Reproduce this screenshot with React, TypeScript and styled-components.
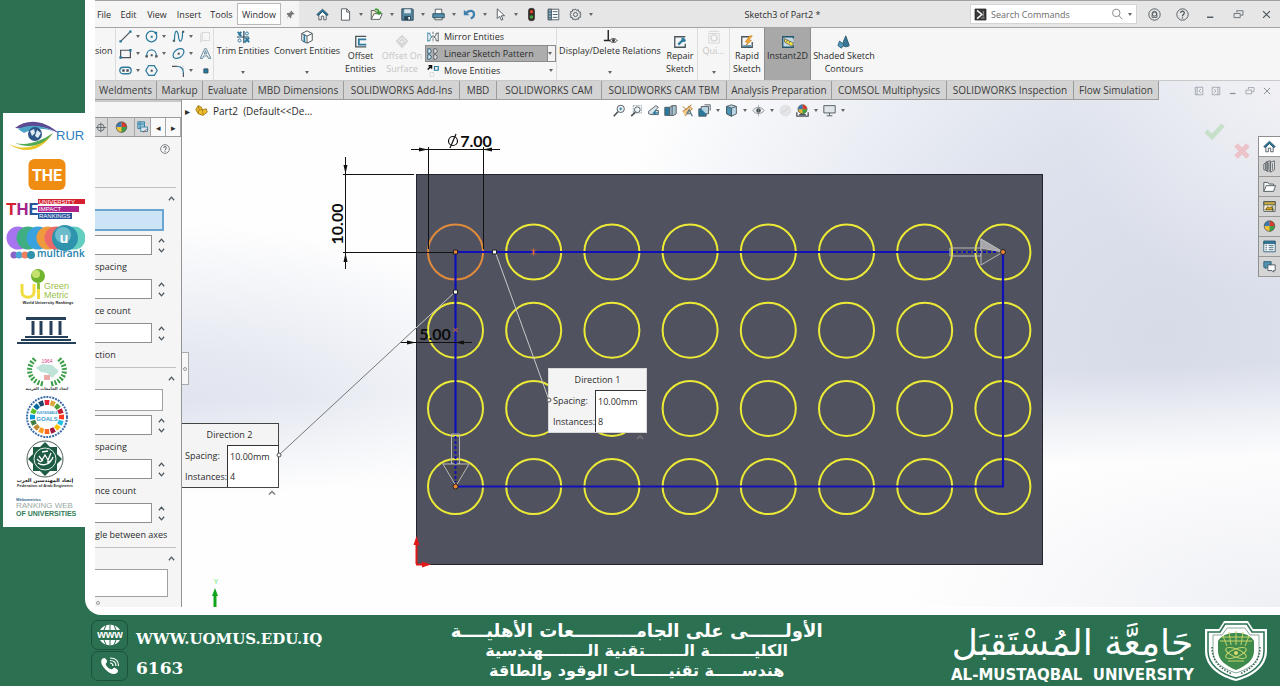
import React from "react";
import styled, { createGlobalStyle, css } from "styled-components";

const INK = "#4a545b";
const BLUE = "#2b7a9e";
const GREEN = "#2a7051";

const GlobalStyle = createGlobalStyle`
  *, *::before, *::after { box-sizing: border-box; }
  body {
    margin: 0;
    background: ${GREEN};
    font-family: "Open Sans", "Noto Sans", sans-serif;
    font-size: 9px;
    color: #2c2c2c;
  }
  button, input { font: inherit; color: inherit; }
  button { border: 0; background: none; padding: 0; cursor: pointer; }
`;

/* ---------- page frame ---------- */

const Page = styled.div`
  min-height: 100vh;
  display: grid;
  grid-template-columns: 85px minmax(0, 1fr);
  grid-template-rows: 1fr auto;
  background: ${GREEN};
`;

const Rail = styled.aside`
  padding: 113px 0 0 3px;
`;

const LogoList = styled.div`
  display: flex;
  flex-direction: column;
  overflow: hidden;
  background: #fff;
  svg { display: block; }
`;

const Card = styled.main`
  display: flex;
  padding: 0 0 8px 10px;
  background: #fff;
  border-bottom-left-radius: 16px;
`;

const AppWindow = styled.div`
  flex: 1;
  min-width: 0;
  display: flex;
  flex-direction: column;
  overflow: hidden;
`;

/* ---------- icons ---------- */

const Svg = styled.svg<{ $s?: number }>`
  display: block;
  flex: none;
  width: ${(p) => p.$s ?? 14}px;
  height: ${(p) => p.$s ?? 14}px;
  overflow: visible;
  fill: none;
  stroke: ${INK};
  stroke-width: 1.1;
`;

const art: Record<string, React.ReactNode> = {
  home: <><path d="M3.500 8v6.500h3V10h3v4.500h3V8L8 4z" fill="#fff" /><path d="M1 8 8 1.500l7 6.500-1.500 1.500L8 4.500 2.500 9.500z" fill={BLUE} stroke="#25495c" strokeWidth="1" /></>,
  file: <path d="M3 1h6.500L13 4.500V15H3zM9.500 1v4H13" fill="#fff" />,
  open: <><path d="M1.500 14V3h4l1.500 2h3" fill="#f0e9c8" /><path d="M1.500 14 5 7h10l-3 7z" fill="#fff" /><path d="M6 2c4-1 5 1 5 4M8.500 4.500 11 7.500l2.500-3" stroke="#3a9a2d" strokeWidth="2" /></>,
  save: <><path d="M1 1h13l1 1v13H1z" fill="#54869f" stroke="#2a4756" /><path d="M4 1.500h8v5H4z" fill="#dce8ee" stroke="none" /><path d="M4 10h8v5H4z" fill="#2a4756" stroke="none" /><path d="M9 11h2v3H9z" fill="#fff" stroke="none" /></>,
  print: <><path d="M4 7V1.500h8V7" fill="#fff" /><path d="M1 7h14v5H1z" fill="#4f8fb0" stroke="#28495a" /><path d="M3.500 12h9v2.500h-9z" fill="#fff" /></>,
  undo: <><path d="M1 2v7h7z" fill="#3f7fae" stroke="none" /><path d="M4 6c4-4 9-3 9.500 1 .3 3-1.500 5-4 6" stroke="#3f7fae" strokeWidth="2.800" /></>,
  cursor: <path d="M4 1v12l3-3 2 5 2-1-2-4.500h4z" fill="#fff" />,
  traffic: <><rect x="4.500" y="0.500" width="7" height="15" rx="2.500" fill="#3c2b24" stroke="#2b2b2b" /><circle cx="8" cy="4.500" r="2" fill="#e3422d" stroke="none" /><circle cx="8" cy="11" r="2.200" fill="#3fa648" stroke="none" /></>,
  list: <><path d="M1.500 1.500h13v13h-13z" fill="#fff" /><path d="M1.500 1.500h4v13h-4z" fill="#84aec2" /><path d="M7 4.500h6M7 8h6M7 11.500h6M1.500 5h4M1.500 8.500h4M1.500 12h4" stroke="#35566a" /></>,
  gear: <><path d="m8 1 1.200 2 2.200-.8.4 2.400 2.400.4-.8 2.200L15 8l-1.600 1.200.8 2.200-2.400.4-.4 2.400-2.200-.8L8 15l-1.200-1.600-2.200.8-.4-2.400-2.400-.4.8-2.200L1 8l1.600-1.200-.8-2.200 2.400-.4.4-2.400 2.200.8z" /><circle cx="8" cy="8" r="2.500" /></>,
  pin: <path d="m9 1 6 6-1.500 1-1.500-.5-2.500 3v3L8 15l-3-4-4 4 3-5-3-3 1.500-1.500h3l3-2.500L8 2z" fill="#777" stroke="none" />,
  terminal: <><path d="M0 0h16v16H0z" fill="#3a3a3a" stroke="#222" /><path d="m3 2 7 6-7 6" stroke="#fff" strokeWidth="2" /><path d="M9 13h5M12 3v8" stroke="#bbb" /></>,
  search: <><circle cx="7" cy="6.500" r="5" stroke="#777" /><path d="m10.500 10 4.500 5" stroke="#777" /></>,
  user: <><circle cx="8" cy="8" r="7" /><circle cx="8" cy="7" r="3" /><path d="M5 11.500h6V9c-1-5-5-5-6 0z" /></>,
  help: <><circle cx="8" cy="8" r="7" /><path d="M5.800 6.200c0-3 4.400-3 4.400 0C10.200 8 8 8 8 10M8 11.500v1.500" strokeWidth="1.500" /></>,
  minimize: <path d="M3 12h9" strokeWidth="2" />,
  restore: <path d="M5.500 5V2.500h9V9h-3M1.500 6.500h9v6h-9z" />,
  close: <path d="m3 3 10 10M13 3 3 13" strokeWidth="1.600" />,
  paneLeft: <path d="M2 2h12v12H2zM5 2v12M11 5 8 8l3 3" />,
  paneRight: <path d="M2 2h12v12H2zM11 2v12M5 5l3 3-3 3" />,
  line: <><path d="M2 14 14 2" stroke={INK} strokeWidth="1.500" /><path d="M.5 12.500h3v3h-3zM12.500.5h3v3h-3z" fill={BLUE} stroke="none" /></>,
  circle: <><circle cx="8" cy="8" r="6.500" stroke={BLUE} strokeWidth="1.500" /><path d="M7 7h2.500v2.500H7zM12 2h3v3h-3z" fill={BLUE} stroke="none" /></>,
  spline: <><path d="M3 14C3-2 7-1 8 8s5 8 5-6" stroke={BLUE} strokeWidth="1.500" /><path d="M1 12h2.500v2.500H1zM12.500 1H15v2.500h-2.500z" fill={INK} stroke="none" /></>,
  plane: <path d="M4 3h9v10H4zM4 13l-2 2V5l2-2" stroke="#d3d3d3" />,
  rect: <><path d="M2 4h12v9H2z" stroke={INK} strokeWidth="1.500" /><path d="M.5 11.500h3v3h-3zM12.500 2.500h3v3h-3z" fill={BLUE} stroke="none" /></>,
  arc: <><path d="M2 11C2 1 14 1 14 11" stroke={BLUE} strokeWidth="1.500" /><path d="M.5 10h3v3h-3zM12.500 10h3v3h-3zM7 9h2.500v2.500H7z" fill={INK} stroke="none" /></>,
  ellipse: <><ellipse cx="8" cy="8" rx="7.500" ry="5" transform="rotate(-38 8 8)" stroke={BLUE} strokeWidth="1.500" /><path d="M7 7h2.500v2.500H7z" fill={INK} stroke="none" /></>,
  textA: <path d="m1.500 14 5.500-12h2L14.500 14h-3l-1-3h-5l-1 3zM6.500 8.500h3L8 4.500z" stroke="#557f96" />,
  slot: <><rect x="1" y="4" width="14" height="8" rx="4" stroke={BLUE} strokeWidth="1.600" /><path d="M4 6.500h3v3H4zM9 6.500h3v3H9z" fill={INK} stroke="none" /></>,
  polygon: <><path d="M4.500 2h7L15 8l-3.500 6h-7L1 8z" stroke={BLUE} strokeWidth="1.500" /><path d="M7 7h2.500v2.500H7z" fill={INK} stroke="none" /></>,
  fillet: <><path d="M6 3c5 0 8 3 8 8" stroke={BLUE} strokeWidth="1.500" /><path d="M7 3h7v6" stroke="#aaa" strokeDasharray="1 2" /><path d="M0 3h6M14 11v5" stroke={INK} strokeWidth="1.500" /></>,
  point: <path d="M6 6h5v5H6z" fill={BLUE} stroke="#25495c" />,
  trim: <><path d="M1 8h14M9 1v14" stroke="#25495c" strokeWidth="1.400" /><path d="m2 2 4 5M6 2 3 6M11 9l4 5M15 9l-5 5" stroke={BLUE} strokeWidth="2.200" /><circle cx="12.500" cy="4" r="1.700" stroke={BLUE} /><circle cx="4" cy="12" r="1.700" stroke={BLUE} /></>,
  convert: <><path d="m8 1 6 3v8l-6 3-6-3V4z" fill="#fff" /><path d="M2 4l6 3 6-3M8 7v8" /><path d="M5 5v9" stroke={BLUE} strokeWidth="2" /></>,
  offset: <><path d="M14 1.500H2v12h12" stroke={INK} strokeWidth="1.500" /><path d="M14 5H5.500v6H14" stroke={BLUE} strokeWidth="2" /></>,
  offsetSurface: <path d="m8 1 6 6-6 7-6-7zM8 5l3 3-3 3-3-3z" stroke="#d6d6d6" strokeWidth="2" />,
  mirror: <><path d="M8 1v14" stroke={INK} strokeDasharray="3 1.500" /><path d="M1 2v12M1 3h3v3l3 2-3 2v3H1" stroke={BLUE} /><path d="M15 2v12M15 3h-3v3L9 8l3 2v3h3" stroke={INK} /></>,
  linear: <><path d="M1 1h3l2 3-2 3H1zM1 9h3l2 3-2 3H1z" stroke="#1f556f" fill="#cfe0e8" /><path d="M9 1h3l2 3-2 3H9zM9 9h3l2 3-2 3H9z" fill="#ddd" /></>,
  move: <><path d="m1 6 5-5M2 1h4v4" stroke="#111" strokeWidth="2" /><path d="M10 2h5v5h-5z" stroke={BLUE} strokeWidth="1.600" /><path d="M4 10h5v5H4z" stroke="#c5c5c5" strokeDasharray="1.500 1" /></>,
  relation: <><path d="M6 0v12M1 12h8" stroke="#222" strokeWidth="1.600" /><path d="M8 12c2-3 6-3 8 0-2 3-6 3-8 0z" fill="#fff" stroke="#333" /><circle cx="12" cy="12" r="1.600" fill="#333" stroke="none" /></>,
  repair: <><path d="M14 2H2v12h12v-4" stroke={INK} strokeWidth="1.500" /><path d="m6 11 5-5" stroke={BLUE} strokeWidth="2.500" /><path d="M10 4c2-1 4 0 4 3l-3 .5z" fill={BLUE} stroke={BLUE} /></>,
  snap: <><path d="M2 1.500h12M2 4v11h12V4z" stroke="#d6d6d6" /><circle cx="8" cy="9" r="3.500" stroke="#d6d6d6" strokeWidth="1.500" /></>,
  rapid: <><path d="M11 2H2v12h12V8" stroke={INK} strokeWidth="1.500" /><path d="M3.500 12.500h9" stroke={BLUE} strokeWidth="1.500" /><path d="m11 1-5 7h3l-2 4 6-6h-3l4-5z" fill="#f5b13a" stroke="#c67c18" strokeWidth=".8" /></>,
  instant: <><path d="M14 4V2H2v12h12v-2" stroke="#1f556f" strokeWidth="1.500" fill="#c5d8e2" /><path d="m4 4 10 5-1 4L4 8z" fill="#f3e34a" stroke="#555" strokeWidth=".8" /><path d="m7 6-.5 2M10 7.500 9.500 9" stroke="#555" /></>,
  shaded: <><path d="M6 11 10 1l4 11c-2 2-6 2-8-1z" fill="#3a7794" stroke="#25586f" /><path d="m1 12 2-5 5 4-3 4z" fill="#5797b5" stroke="#2c6580" /></>,
  zoomFit: <><circle cx="9.500" cy="6" r="4.500" fill="#eef4f7" /><path d="m6 9.500-5 5.500" strokeWidth="2" /><path d="M7.500 6h4M9.500 4v4" stroke={BLUE} /></>,
  zoomArea: <><path d="M4 2h10v9H4z" stroke="#8a9ba5" strokeDasharray="2 1" /><circle cx="9" cy="7" r="3.500" fill="#eef4f7" /><path d="m6.500 10-5 5" strokeWidth="2" /></>,
  prevView: <><path d="m2 9 9-7 3 2-4 4h4v5H5l-3-1z" fill="#dbe6ec" /><path d="M14 11H8l3-3M8 11l3 2" stroke={BLUE} strokeWidth="1.500" /></>,
  section: <><path d="M1 4h6v10H1z" fill={BLUE} /><path d="M7 4l3-2h5v10l-3 2H7z" fill="#aac5d2" /><path d="M10 2v12" /></>,
  wand: <><path d="m2 3 5 4M8 4l5-3M2 9l9-6 3 3-9 9" fill="#f4c989" stroke="#b0793a" /><path d="m7 12 3-5 4 8M8 12h5" stroke="#54798c" strokeWidth="1.500" /></>,
  orient: <><path d="M1 6h9v9H1z" fill={BLUE} /><path d="M4 6V3h9v9h-3" fill="#b8d2df" /><path d="M8 1h7v7" /></>,
  display: <><path d="m8 1 6 2v9l-6 3-6-3V3z" fill="#b8d6e4" /><path d="m2 3 6 2v10l-6-3z" fill="#4c94b5" /><path d="m8 5 6-2" /></>,
  eye: <><path d="M1 8c3-5 11-5 14 0-3 5-11 5-14 0z" fill="#eee" stroke="#8a9297" /><circle cx="8" cy="8" r="2.800" fill="#4b565c" stroke="none" /><path d="M8 1v14" stroke="#888" strokeWidth=".8" /></>,
  ballGrey: <><circle cx="8" cy="8" r="6.500" fill="#e4e4e6" stroke="#dcdce0" /><path d="M8 8 12 3M8 8l-5 3" stroke="#cfcfd4" /></>,
  ball: <><circle cx="8" cy="7.500" r="6.500" fill="#f2c230" stroke="none" /><path d="M8 7.500V1a6.500 6.500 0 0 1 6.500 6.500z" fill="#d83a2f" stroke="none" /><path d="M8 7.500V1a6.500 6.500 0 0 0-6.500 6.500z" fill="#3b78b8" stroke="none" /><path d="M8 7.500v6.500a6.500 6.500 0 0 0 6.500-6.500z" fill="#3f9c49" stroke="none" /><circle cx="8" cy="7.500" r="6.500" strokeWidth=".9" /></>,
  scene: <><circle cx="8" cy="6.500" r="5.500" fill="#e9b42c" stroke="#555" /><path d="M8 6.500V1a5.500 5.500 0 0 1 5.500 5.500z" fill="#d83a2f" stroke="none" /><path d="M8 6.500V1a5.500 5.500 0 0 0-5.500 5.500z" fill="#3b78b8" stroke="none" /><path d="M8 6.500h5.500A5.500 5.500 0 0 1 8 12z" fill="#3f9c49" stroke="none" /><path d="M1 10v5h14v-5M4 13h8" strokeWidth="1.600" /></>,
  monitor: <><path d="M1 2h14v9H1z" fill="#dfe5e9" /><path d="M8 11v3M4.500 14.500h7" /></>,
  part: <><path d="m1 7 3-5 4 2 1 3 5-1 1 4-5 4-6-2z" fill="#f0bf2f" stroke="#9c7414" /><path d="m4 2 1 5 4 0M5 7l-1 4M9 7l1 6" stroke="#9c7414" strokeWidth=".9" /></>,
  target: <><circle cx="7" cy="8" r="5" /><path d="M0 8h15M7 1v14" /></>,
  table: <><path d="M1 1h9v9H1z" fill="#9cc7dc" stroke={BLUE} /><path d="M1 4h9M4 1v9M5 8h9v6H5z" stroke={BLUE} fill="#d7e7ef" /><path d="M8 15l5-4" stroke="#a44" /></>,
  library: <><path d="m1 5 4-3v11l-4-1zM5 2l4-1v12l-4 1zM9 3l5-2v11l-5 3z" fill="#e8e8e8" strokeWidth="1" /><path d="M3 4v8M7 3v9M11.500 4v8" strokeWidth="1" /></>,
  folder: <><path d="M1 14V3h5l1.500 2H13v2" fill="#f5f5f5" /><path d="m1 14 3-7h11.500L13 14z" fill="#fff" /></>,
  palette: <><path d="M1 2h14v12H1z" fill="#fff7d8" /><path d="M1 2h14v4H1z" fill="#c9a93c" /><path d="m3 12 3-4 2 2 2-2 3 4z" fill="#d8a51d" stroke="#6a5210" /><path d="M12 7v7" /></>,
  props: <><path d="M1 1.500h14v13H1z" fill="#fff" stroke="#2f6178" /><path d="M1 1.500h14v3H1z" fill={BLUE} stroke="#2f6178" /><path d="M3 7h2M3 9.500h2M3 12h2M7 7h6M7 9.500h6M7 12h6" stroke="#2f6178" /></>,
  chat: <><path d="M1 2h9v7H5l-2 2V9H1z" fill="#4f93b3" stroke="#2d5f76" /><path d="M6 6h9v7h-2v2l-2-2H6z" fill="#fff" /></>,
};

const Icon = ({ name, s }: { name: string; s?: number }) => (
  <Svg $s={s} viewBox="0 0 16 16" aria-hidden="true">{art[name]}</Svg>
);

const CaretSvg = styled.svg`
  display: block;
  flex: none;
  width: 4px;
  height: 3px;
  fill: #666;
`;
const Caret = () => <CaretSvg viewBox="0 0 4 3" aria-hidden="true"><path d="M0 0h4L2 3z" /></CaretSvg>;

/* ---------- title bar ---------- */

const TitleBar = styled.header`
  display: flex;
  height: 28px;
  border-top: 1px solid #a59fa2;
  border-bottom: 1px solid #a3a3a3;
  background: #e6e6e6;
`;

const MenuBar = styled.nav`
  display: flex;
  align-items: center;
  width: 204px;
  background: #f5f5f5;
`;

const MenuItem = styled.button<{ $w: number; $open?: boolean }>`
  width: ${(p) => p.$w}px;
  height: 22px;
  white-space: nowrap;
  ${(p) => p.$open && css`
    margin-left: 2px;
    background: #fff;
    border: 1px solid #b9b9b9;
  `}
`;

const IconButton = styled.button<{ $w: number }>`
  flex: none;
  display: flex;
  align-items: center;
  justify-content: center;
  width: ${(p) => p.$w}px;
  min-height: 15px;
`;

const QuickTools = styled.div`
  display: flex;
  align-items: center;
  padding-left: 12px;
`;

const DocTitle = styled.h1`
  flex: 1;
  margin: 0;
  align-self: center;
  text-align: center;
  font-size: 9px;
  font-weight: 400;
  white-space: nowrap;
`;

const SearchBox = styled.label`
  display: flex;
  align-items: center;
  gap: 5px;
  width: 167px;
  height: 20px;
  margin: 3px 3px 0 0;
  padding: 0 4px;
  background: #fff;
  border: 1px solid #d4d4d4;
`;

const SearchInput = styled.input`
  flex: 1;
  min-width: 0;
  border: 0;
  padding: 0;
  outline: 0;
  background: none;
  &::placeholder { color: #6c6c6c; opacity: 1; }
`;

const Row = styled.div`
  display: flex;
  align-items: center;
`;

/* ---------- ribbon ---------- */

const Ribbon = styled.section`
  display: flex;
  height: 52px;
  background: #f6f6f6;
  overflow: hidden;
`;

const Clipped = styled.div`
  width: 20px;
  padding-top: 16px;
  line-height: 13px;
`;

const ToolGrid = styled.div`
  display: grid;
  grid-template-columns: 26px 27px 27px 14px;
  grid-auto-rows: 17px;
  width: 99px;
  padding-left: 3px;
  border-left: 1px solid #dcdcdc;
  border-right: 1px solid #dcdcdc;
`;

const ToolCell = styled.button`
  display: flex;
  align-items: center;
  gap: 4px;
`;

const RibbonButton = styled.button<{ $w: number; $tall?: boolean; $on?: boolean; $off?: boolean; $rule?: boolean }>`
  flex: none;
  display: flex;
  flex-direction: column;
  align-items: center;
  width: ${(p) => p.$w}px;
  padding: ${(p) => (p.$tall ? 7 : 2)}px 0 6px;
  line-height: 13px;
  white-space: nowrap;
  ${(p) => p.$on && css`background: #a8a8a8; border: 1px solid #8d8d8d; border-width: 0 1px;`}
  ${(p) => p.$off && css`color: #c4c4c4;`}
  ${(p) => p.$rule && css`border-left: 1px solid #dcdcdc;`}
  ${CaretSvg} { margin-top: auto; }
`;

const PatternList = styled.div`
  width: 132px;
  display: flex;
  flex-direction: column;
  border-right: 1px solid #dcdcdc;
`;

const PatternItem = styled.button<{ $on?: boolean }>`
  display: flex;
  align-items: center;
  gap: 5px;
  width: 131px;
  height: 17px;
  padding: 0 0 0 2px;
  text-align: left;
  white-space: nowrap;
  ${(p) => p.$on && css`
    border: 1px solid #8a8a8a;
    padding-left: 1px;
    background: linear-gradient(to right, #adadad 121px, #8a8a8a 121px, #8a8a8a 122px, #f2f2f2 122px);
  `}
  ${CaretSvg} { margin: 0 3px 0 auto; }
`;

/* ---------- workspace ---------- */

const Workspace = styled.div`
  flex: 1;
  display: flex;
  flex-direction: column;
  background:
    radial-gradient(ellipse 380px 170px at 100% 100%, #eff0f5 0%, rgba(255, 255, 255, 0) 100%),
    linear-gradient(178deg, rgba(254, 254, 254, 0) 57%, #fefefe 74%),
    radial-gradient(ellipse 220px 220px at 100% 0%, #f1f1f5 0%, rgba(241, 241, 245, 0) 100%),
    radial-gradient(ellipse 420px 200px at 6% 65%, #dfe3ee 0%, rgba(223, 227, 238, 0.8) 35%, rgba(255, 255, 255, 0) 100%),
    radial-gradient(ellipse 560px 520px at 90% 48%, #d7dbe8 0%, #dde2ed 40%, rgba(255, 255, 255, 0) 100%),
    #fefefe;
`;

const TabRow = styled.div`
  display: flex;
  height: 20px;
  border-top: 1px solid #c9c9c9;
`;

const Tabs = styled.nav`
  display: flex;
  font-size: 10px;
`;

const Tab = styled.button<{ $w: number }>`
  width: ${(p) => p.$w}px;
  background: #d3d3d3;
  border: 1px solid #9b9b9b;
  border-width: 0 1px 1px 0;
  color: #3c3c3c;
  white-space: nowrap;
`;

const WindowTools = styled.div`
  display: flex;
  align-items: center;
  margin-left: auto;
  padding-right: 5px;
  opacity: 0.6;
`;

const Body = styled.div`
  flex: 1;
  display: flex;
`;

const Panel = styled.aside`
  flex: none;
  width: 87px;
  background: #f5f5f6;
  border-right: 1px solid #949494;
`;

const PanelTop = styled.div`
  height: 18px;
  border-top: 2px solid #c9c9c9;
  border-bottom: 1px solid #9b9b9b;
`;

const PanelTabs = styled.div`
  display: flex;
  height: 19px;
  overflow: hidden;
  background: #d6d6d6;
  border-bottom: 1px solid #9b9b9b;
`;

const PanelTab = styled.button<{ $w: number; $light?: boolean }>`
  flex: none;
  display: flex;
  align-items: center;
  justify-content: center;
  width: ${(p) => p.$w}px;
  border-right: 1px solid #a8a8a8;
  font-size: 9px;
  ${(p) => p.$light && css`background: #fafafa;`}
`;

const PanelHead = styled.div`
  display: flex;
  justify-content: flex-end;
  align-items: flex-start;
  height: 51px;
  margin-right: 5px;
  padding: 7px 6px 0 0;
  border-bottom: 1px solid #c2c2c2;
`;

const Group = styled.section`
  margin-right: 5px;
  border-bottom: 1px solid #c2c2c2;
  &:last-child { border-bottom: 0; }
`;

const Collapse = styled.button`
  display: flex;
  align-items: center;
  justify-content: flex-end;
  width: 100%;
  height: 21px;
  padding-right: 1px;
`;

const WideField = styled.input<{ $w: number; $h: number; $on?: boolean }>`
  display: block;
  width: ${(p) => p.$w}px;
  height: ${(p) => p.$h}px;
  margin-bottom: 4px;
  padding: 0 4px;
  border: 1px solid #a0a0a0;
  border-left: 0;
  border-radius: 0;
  background: #fff;
  ${(p) => p.$on && css`background: #cde3f6; border-color: #6aa6cf; border-width: 2px 2px 2px 0;`}
`;

const ScrollDot = styled.div`
  width: 4px;
  height: 4px;
  margin: 0 0 0 1px;
  border: 1px solid #999;
  border-radius: 50%;
`;

const SpinRow = styled.div`
  display: flex;
  height: 20px;
`;

const SpinField = styled.input`
  width: 57px;
  padding: 0 4px;
  border: 1px solid #8f8f8f;
  border-left: 0;
  background: #fff;
`;

const Spinner = styled.div`
  display: flex;
  flex-direction: column;
  justify-content: space-around;
  align-items: center;
  width: 18px;
`;

const FieldLabel = styled.label`
  display: block;
  height: 24px;
  line-height: 24px;
  white-space: nowrap;
  overflow: hidden;
`;

const Chevron = ({ down, s = 7 }: { down?: boolean; s?: number }) => (
  <Svg $s={s} viewBox="0 0 8 8" aria-hidden="true">
    <path d={down ? "m1 2 3 3.500L7 2" : "m1 6 3-3.500L7 6"} strokeWidth="1.400" />
  </Svg>
);

const Spin = ({ id, label }: { id: string; label?: string }) => (
  <SpinRow>
    <SpinField id={id} aria-label={label} />
    <Spinner>
      <button aria-label="Increase"><Chevron /></button>
      <button aria-label="Decrease"><Chevron down /></button>
    </Spinner>
  </SpinRow>
);

/* ---------- graphics area ---------- */

const Viewport = styled.div`
  flex: 1;
  position: relative;
  min-width: 0;
  overflow: hidden;
`;

const Canvas = styled.svg`
  position: absolute;
  inset: 0;
  width: 100%;
  height: 100%;
`;

const ViewBar = styled.div`
  position: relative;
  display: flex;
  align-items: center;
  height: 21px;
  padding-left: 3px;
`;

const Tree = styled.button`
  display: flex;
  align-items: center;
  gap: 5px;
  width: 426px;
  font-size: 10px;
  text-align: left;
  white-space: pre;
`;

const SplitHandle = styled.div`
  position: absolute;
  left: 0;
  top: 252px;
  width: 7px;
  height: 33px;
  background: #f7f7f7;
  border: 1px solid #aaa;
  border-left: 0;
  display: grid;
  place-items: center;
  &::after {
    content: "";
    width: 4px;
    height: 4px;
    border: 1px solid #999;
    border-radius: 50%;
  }
`;

const Callout = styled.form<{ $x: number; $y: number; $edge: string }>`
  position: absolute;
  left: ${(p) => p.$x}px;
  top: ${(p) => p.$y}px;
  width: 99px;
  display: grid;
  grid-template-columns: 46px 1fr;
  grid-template-rows: 21px 42px;
  background: #f4f4f5;
  border: 1px solid ${(p) => p.$edge};
`;

const CalloutTitle = styled.div`
  grid-column: 1 / 3;
  line-height: 22px;
  text-align: center;
`;

const CalloutLabels = styled.div`
  display: flex;
  flex-direction: column;
  padding-left: 4px;
  line-height: 21px;
`;

const CalloutValues = styled.div`
  display: flex;
  flex-direction: column;
  background: #fff;
  border: 1px solid #333;
  border-width: 1px 0 0 1px;
`;

const CalloutInput = styled.input`
  width: 100%;
  height: 21px;
  border: 0;
  padding: 0 0 0 2px;
  background: none;
`;

const CalloutBox = ({ n, x, y, count, edge }: { n: number; x: number; y: number; count: string; edge: string }) => (
  <Callout $x={x} $y={y} $edge={edge}>
    <CalloutTitle>Direction {n}</CalloutTitle>
    <CalloutLabels>
      <label htmlFor={`sp${n}`}>Spacing:</label>
      <label htmlFor={`in${n}`}>Instances:</label>
    </CalloutLabels>
    <CalloutValues>
      <CalloutInput id={`sp${n}`} defaultValue="10.00mm" />
      <CalloutInput id={`in${n}`} defaultValue={count} />
    </CalloutValues>
  </Callout>
);

const TaskPane = styled.nav`
  position: absolute;
  right: 0;
  top: 36px;
  width: 22px;
  border: 1px solid #8f8f8f;
  border-width: 1px 0 0 1px;
`;

const TaskButton = styled.button<{ $on?: boolean }>`
  display: grid;
  place-items: center;
  width: 21px;
  height: 20px;
  background: ${(p) => (p.$on ? "#fff" : "#d5d5d6")};
  border-bottom: 1px solid #989898;
`;

const Confirm = styled.div`
  position: absolute;
  right: 28px;
  top: 22px;
  width: 52px;
  height: 40px;
`;

const dim = { fontFamily: "Lato, sans-serif", fontSize: 16, fontWeight: 700, fill: "#0b0b0b", textAnchor: "middle" as const };
const PITCH = 78.2;

const Sketch = () => (
  <Canvas role="img" aria-label="Plate with four rows of eight circles">
    <g transform="translate(-182 -100)">
      <rect x="416.500" y="174.500" width="626" height="390" fill="#50535f" stroke="#23252c" />
      <g fill="none" stroke="#ecea36" strokeWidth="2">
        {Array.from({ length: 32 }, (_, k) => (
          <circle key={k} cx={455.5 + (k % 8) * PITCH} cy={252 + Math.floor(k / 8) * PITCH} r="27.500" stroke={k === 0 ? "#e08a3c" : undefined} />
        ))}
      </g>
      <path d="M950 252H455.500V434M455.500 486.500H1003V252" fill="none" stroke="#1010b8" strokeWidth="2.200" />
      <g stroke="#111" fill="none">
        <path d="M411 149.500h89M428.500 147v102M483.500 147v102M345.500 157v112M343 174.500h71M343 252.500h112M400 342.500h72" />
      </g>
      <g fill="#111">
        <path d="m428 149.500-9-2v4zM483 149.500l9-2v4zM345.500 174l-2-9h4zM345.500 253l-2 9h4zM416 342.500l-9-2v4zM455 342.500l9-2v4z" />
      </g>
      <text x="476" y="147" {...dim}>7.00</text>
      <g fill="none" stroke="#111" strokeWidth="1.200"><circle cx="453" cy="141" r="4.500" /><path d="m450 148 6-14" /></g>
      <text transform="translate(343 224) rotate(-90)" {...dim}>10.00</text>
      <text x="435" y="340" {...dim}>5.00</text>
      <g fill="none" stroke="#c9c9c9">
        <path d="M496 254 549 400" />
        <path d="M455 292 416 328" />
        <path d="M416 328 279 455" stroke="#777" />
      </g>
      <g stroke="#b9b9b9" fill="none">
        <path d="M950 248h31v8h-31z" />
        <path d="M981 239v26l22-13z" fill="#55575f" />
        <path d="m981 239 22 13-22-4z" fill="#a7a7ab" />
        <path d="M451.500 434h8v30h-8z" />
        <path d="M443 464h26l-13 22z" fill="#4c4c50" />
      </g>
      <path d="M953 252h45M455.500 436v46" stroke="#1010b8" strokeWidth="2" strokeDasharray="3 2" />
      <g stroke="#222" fill="#ec8532">
        <path d="M453.500 250h4v4h-4z" />
        <circle cx="1003" cy="252" r="2.500" />
        <circle cx="455.500" cy="486.500" r="2.500" />
        <path d="M492.500 250h4v4h-4zM453.500 290h4v4h-4z" fill="#f2f2f2" />
      </g>
      <path d="m531 249.500 5 5m0-5-5 5m2.500-6v7m-80 72.500 4 4m0-4-4 4" stroke="#d96b3c" />
      <path d="M416.500 564v-20M416 564.500h8" stroke="#e01818" strokeWidth="2" />
      <path d="m416.500 536-3 9h6zM431 564.500l-9-3v6z" fill="#e01818" />
      <path d="M215 607v-12" stroke="#12a51b" strokeWidth="3" />
      <path d="m215 588-3 8h6z" fill="#12a51b" />
      <text x="216" y="584" fontSize="7" textAnchor="middle" fill="#3ddc46">Y</text>
      <path d="m269 494.500 3-3 3 3M637 439l3-3 3 3" fill="none" stroke="#777" strokeWidth="1.400" />
    </g>
  </Canvas>
);

const Handles = () => (
  <Canvas aria-hidden="true" pointerEvents="none">
    <g fill="#f4f4f4" stroke="#555">
      <circle cx="97" cy="355" r="2" />
      <circle cx="367" cy="300" r="2" />
    </g>
  </Canvas>
);

/* ---------- partner logos ---------- */

const sans = "Liberation Sans, Arial, sans-serif";

const Logos = () => (
  <LogoList>
    <svg width="82" height="41" viewBox="3 113 82 41" role="img" aria-label="RUR">
      <path d="M15 128c12-9 28-9 45 6-14-8-26-9-34-5z" fill="#5c4a92" />
      <path d="M18 129c14-6 26-3 37 3-12-5-22-4-31 1z" fill="#4ba4c8" />
      <path d="M9 144c16 8 32 2 44-11-12 18-28 22-44 11z" fill="#e8c522" />
      <path d="M15 143c14 3 26-2 38-10-8 11-22 17-38 10z" fill="#52a952" />
      <circle cx="35" cy="134" r="7" fill="#2b5687" />
      <path d="M30 131l4-2 1 4-3 3zM37 130l4 3-3 5-3-2z" fill="#dfeaf3" />
      <text x="56" y="140" fontFamily={sans} fontSize="13" fill="#2f7fc1">RUR</text>
    </svg>
    <svg width="82" height="40" viewBox="3 154 82 40">
      <rect x="28.500" y="159" width="37" height="31" rx="6" fill="#ee8d12" />
      <text x="47" y="181" textAnchor="middle" fontFamily="Roboto, sans-serif" fontWeight="700" fontSize="16" fill="#fff">THE</text>
    </svg>
    <svg width="82" height="29" viewBox="3 194 82 29">
      <path d="M38 199h48v5H38z" fill="#d51f2e" />
      <path d="M38 206h41v6H38z" fill="#b0228c" />
      <path d="M38 213h34v6H38z" fill="#27539d" />
      <text x="6" y="215" fontFamily="Roboto, sans-serif" fontWeight="700" fontSize="17" fill="#d51f2e">T<tspan fill="#a5228c">H</tspan><tspan fill="#27539d">E</tspan></text>
      <g fontFamily={sans} fontSize="6" fill="#fff">
        <text x="39" y="204">UNIVERSITY</text>
        <text x="39" y="211">IMPACT</text>
        <text x="39" y="218">RANKINGS</text>
      </g>
    </svg>
    <svg width="82" height="40" viewBox="3 223 82 40">
      <circle cx="18" cy="238" r="11.500" fill="#a774f0" />
      <circle cx="28" cy="238" r="11.500" fill="#3fae82" />
      <circle cx="38" cy="238" r="11.500" fill="#3aa2df" />
      <circle cx="74" cy="238" r="11.500" fill="#63cfc0" />
      <circle cx="48" cy="238" r="11.500" fill="#f09a3e" />
      <circle cx="56" cy="238" r="11.500" fill="#ee6a68" />
      <circle cx="65" cy="238" r="13" fill="#2f93ad" />
      <circle cx="63" cy="235" r="8" fill="#6dbccb" />
      <text x="64" y="243" textAnchor="middle" fontFamily={sans} fontWeight="700" fontSize="14" fill="#fff">u</text>
      <circle cx="14" cy="255" r="3.500" fill="#8a63c9" /><circle cx="19" cy="255" r="3.500" fill="#49a6d6" /><circle cx="25" cy="255" r="3.500" fill="#ef7f5f" /><circle cx="31" cy="255" r="4" fill="#2f93ad" />
      <text x="37" y="257" fontFamily="Open Sans, sans-serif" fontWeight="600" fontSize="10" fill="#2180ac">multirank</text>
    </svg>
    <svg width="82" height="46" viewBox="3 263 82 46">
      <circle cx="38" cy="276" r="7" fill="#6fb52e" />
      <circle cx="36" cy="274" r="4" fill="#c6e26e" />
      <path d="M37 283h3v8h-3z" fill="#8fbf3a" />
      <path d="M22 284v8c0 7 12 7 12 0v-8" fill="none" stroke="#f0dc3f" strokeWidth="3" />
      <path d="M38.500 289v10" stroke="#f0dc3f" strokeWidth="3" />
      <g fontFamily={sans} fontSize="9" fill="#9cc04a">
        <text x="44" y="289">Green</text>
        <text x="44" y="298">Metric</text>
      </g>
      <text x="48" y="304" textAnchor="middle" fontFamily={sans} fontWeight="700" fontSize="4" fill="#222">World University Rankings</text>
    </svg>
    <svg width="82" height="41" viewBox="3 309 82 41">
      <path d="M26 317h40v3H26zM25 336h43v2H25zM21 339h50v2H21zM17 342h59v2H17z" fill="#27405a" />
      <path d="M33 321v14M41 321v14M51 321v14M60 321v14" stroke="#27405a" strokeWidth="3" />
    </svg>
    <svg width="82" height="45" viewBox="3 350 82 45">
      <path d="M35 359c-9 8-7 22 8 25M59 359c9 8 7 22-8 25" fill="none" stroke="#3c9f4a" strokeWidth="5" strokeDasharray="2 1.500" />
      <path d="M36 368l6-4 10 1 7 6-7 7-5-5-6-1z" fill="#bfe3d8" />
      <path d="M44 375h6v5h-6z" fill="#e9a9a6" />
      <text x="47" y="363" textAnchor="middle" fontFamily={sans} fontSize="5" fill="#d48">1964</text>
      <text x="47" y="390" textAnchor="middle" fontFamily="DejaVu Sans, sans-serif" fontWeight="700" fontSize="4" fill="#333">اتحاد الجامعات العربية</text>
    </svg>
    <svg width="82" height="43" viewBox="3 395 82 43">
      <circle cx="47" cy="417" r="20" fill="none" stroke="#3a6ca8" strokeWidth="2" strokeDasharray="2 1" />
      {["#e5243b", "#dda63a", "#4c9f38", "#c5192d", "#ff3a21", "#26bde2", "#fcc30b", "#a21942", "#fd6925", "#fd9d24", "#bf8b2e", "#3f7e44", "#0a97d9", "#56c02b", "#00689d", "#19486a"].map((c, i) => (
        <path key={c} d="M44.500 400h5l-.5 5h-4z" fill={c} transform={`rotate(${i * 22.5} 47 417)`} />
      ))}
      <g textAnchor="middle" fontFamily={sans} fontWeight="700" fill="#3a9bd0">
        <text x="47" y="414" fontSize="3">SUSTAINABLE</text>
        <text x="47" y="421" fontSize="6">GOALS</text>
      </g>
    </svg>
    <svg width="82" height="54" viewBox="3 438 82 54">
      <circle cx="45" cy="459" r="18" fill="#fff" stroke="#4a5c54" />
      <path d="M33 447h24v24H33z" fill="#1d5c43" />
      <path d="M33 447h24v24H33z" fill="#1d5c43" transform="rotate(45 45 459)" />
      <circle cx="45" cy="459" r="11" fill="none" stroke="#e3efe9" />
      <path d="M38 463c4 3 10 2 13-2M39 456l3 4 3-5 3 5 3-7M42 452l6-1M37 459c2 2 3 4 6 1M47 462c3 0 5-2 6-5" fill="none" stroke="#fff" strokeWidth="1.300" />
      <text x="45" y="482" textAnchor="middle" fontFamily="DejaVu Sans, sans-serif" fontWeight="700" fontSize="5" fill="#111">إتحاد المهندسين العرب</text>
      <text x="45" y="487" textAnchor="middle" fontFamily={sans} fontWeight="700" fontSize="4" fill="#333">Federation of Arab Engineers</text>
    </svg>
    <svg width="82" height="35" viewBox="3 492 82 35">
      <text x="16" y="501" fontFamily={sans} fontWeight="700" fontSize="4" fill="#2c5f87">Webometrics</text>
      <text x="16" y="508" fontFamily={sans} fontSize="8" fill="#9aa9a2">RANKING WEB</text>
      <text x="16" y="516" fontFamily={sans} fontWeight="700" fontSize="7" fill="#2f7d57">OF UNIVERSITIES</text>
    </svg>
  </LogoList>
);

/* ---------- footer ---------- */

const Footer = styled.footer`
  grid-column: 1 / 3;
  display: flex;
  justify-content: space-between;
  align-items: center;
  min-height: 71px;
  padding: 0 12px 0 91px;
  color: #fff;
`;

const Contacts = styled.address`
  display: grid;
  grid-template-columns: 37px auto;
  column-gap: 8px;
  row-gap: 1px;
  align-items: center;
  font: 700 15px "DejaVu Serif", serif;
`;

const Badge = styled.span`
  display: grid;
  place-items: center;
  height: 30px;
  border: 1px solid #1c5239;
  border-radius: 7px;
`;

const FooterLink = styled.a<{ $big?: boolean }>`
  color: #fff;
  text-decoration: none;
  padding-top: ${(p) => (p.$big ? 4 : 8)}px;
  font-size: ${(p) => (p.$big ? 17 : 15)}px;
`;

const Motto = styled.div`
  direction: rtl;
  text-align: center;
  font: 700 16px/20px "DejaVu Sans", sans-serif;
`;

const MottoLine = styled.p<{ $lead?: boolean }>`
  margin: 0;
  font-size: ${(p) => (p.$lead ? 18 : 16)}px;
  white-space: nowrap;
`;

const Brand = styled.div`
  display: flex;
  align-items: center;
  gap: 10px;
`;

const BrandText = styled.div`
  display: flex;
  flex-direction: column;
  align-items: center;
`;

const BrandArabic = styled.div`
  direction: rtl;
  font: 400 36px/48px "DejaVu Sans", sans-serif;
  white-space: nowrap;
`;

const BrandLatin = styled.div`
  font: 700 15px/16px "DejaVu Sans", sans-serif;
  white-space: pre;
`;

const Shield = () => (
  <svg width="64" height="62" viewBox="0 0 64 62" role="img" aria-label="Al-Mustaqbal University crest">
    <path d="M20 1h24l5 8h14v22c0 16-15 26-31 30C16 57 1 47 1 31V9h14z" fill="#fff" />
    <path d="M21 4h22l5 8h12v19c0 14-13 23-28 27C17 54 4 45 4 31V12h12z" fill="none" stroke={GREEN} strokeWidth="1.500" />
    <path d="M23 8h18l5 7h9v16c0 11-10 18-23 22C19 49 9 42 9 31V15h9z" fill="#fff" stroke="#8aa89a" />
    <path d="M14 21c6-11 30-11 36 0v10c0 9-8 15-18 19-10-4-18-10-18-19z" fill="#3d8a4c" />
    <path d="M32 11v14M25 12l2 13M39 12l-2 13M19 16l4 10M45 16l-4 10M16 21h32M18 17h28" stroke="#c6d46a" fill="none" />
    <g fill="none" stroke="#c6d46a"><ellipse cx="32" cy="33" rx="11" ry="4" transform="rotate(22 32 33)" /><ellipse cx="32" cy="33" rx="11" ry="4" transform="rotate(-22 32 33)" /><path d="M24 41h16" /></g>
    <circle cx="32" cy="33" r="2" fill="#e0dc6a" />
    <path d="M8 27c0 16 10 22 20 27M56 27c0 16-10 22-20 27" fill="none" stroke="#35614c" strokeWidth="1.500" strokeDasharray="1.500 1.500" />
  </svg>
);

const Globe = () => (
  <svg width="26" height="22" viewBox="0 0 26 22" aria-hidden="true">
    <path d="M3 6C7-1 19-1 23 6zM3 16c4 7 16 7 20 0z" fill="#fff" />
    <path d="M13 1v5M9 1 7 6M17 1l2 5M13 16v5M9 21l-2-5M17 21l2-5" stroke={GREEN} />
    <text x="13" y="14" textAnchor="middle" fontFamily={sans} fontWeight="700" fontSize="11" fill="#fff">www</text>
  </svg>
);

const Phone = () => (
  <svg width="20" height="18" viewBox="0 0 20 18" aria-hidden="true">
    <path d="M2 2c2-2 4-1 5 2 .5 2-2 2-1 4s3 4 5 4c2 1 2-2 4-1 3 1 4 3 2 5-3 2-7 1-11-3S0 5 2 2z" fill="#fff" />
    <path d="M10 6c2 0 3 1 3 3M10 3.500c4 0 6 2 6 5.500M10 1c6 0 8.500 3 8.500 8" fill="none" stroke="#fff" strokeWidth="1.200" />
  </svg>
);

/* ---------- data ---------- */

const menus: [string, number][] = [["File", 18], ["Edit", 31], ["View", 26], ["Insert", 38], ["Tools", 27]];
const quick: [string, boolean][] = [["file", true], ["open", true], ["save", true], ["print", true], ["undo", true], ["cursor", true], ["traffic", false], ["list", false], ["gear", true]];
const tabs: [string, number][] = [
  ["Weldments", 62], ["Markup", 46], ["Evaluate", 50], ["MBD Dimensions", 91], ["SOLIDWORKS Add-Ins", 116], ["MBD", 37],
  ["SOLIDWORKS CAM", 105], ["SOLIDWORKS CAM TBM", 125], ["Analysis Preparation", 105], ["COMSOL Multiphysics", 115],
  ["SOLIDWORKS Inspection", 127], ["Flow Simulation", 85],
];
const tools = ["line", "circle", "spline", "plane", "rect", "arc", "ellipse", "textA", "slot", "polygon", "fillet", "point"];
const noCaret = ["plane", "textA", "polygon", "point"];
const views: [string, boolean][] = [["zoomFit", false], ["zoomArea", false], ["prevView", false], ["section", false], ["wand", false], ["orient", true], ["display", true], ["eye", true], ["ballGrey", false], ["scene", true], ["monitor", true]];

export default function App() {
  return (
    <Page>
      <GlobalStyle />
      <Rail><Logos /></Rail>
      <Card>
        <AppWindow>
          <TitleBar>
            <MenuBar>
              {menus.map(([m, w]) => <MenuItem key={m} $w={w}>{m}</MenuItem>)}
              <MenuItem $w={44} $open>Window</MenuItem>
              <IconButton $w={18} aria-label="Pin menu"><Icon name="pin" s={9} /></IconButton>
            </MenuBar>
            <QuickTools>
              <IconButton $w={23} aria-label="home"><Icon name="home" s={13} /></IconButton>
              {quick.map(([n, c]) => (
                <Row key={n}>
                  <IconButton $w={22} aria-label={n}><Icon name={n} s={13} /></IconButton>
                  {c && <IconButton $w={9} aria-label={`${n} options`}><Caret /></IconButton>}
                </Row>
              ))}
            </QuickTools>
            <DocTitle>Sketch3 of Part2 *</DocTitle>
            <SearchBox>
              <Icon name="terminal" s={11} />
              <SearchInput placeholder="Search Commands" aria-label="Search Commands" />
              <Icon name="search" s={12} />
              <Caret />
            </SearchBox>
            <Row>
              {["user", "help", "minimize", "restore", "close"].map((n) => (
                <IconButton key={n} $w={28} aria-label={n}><Icon name={n} s={n === "user" || n === "help" ? 13 : 11} /></IconButton>
              ))}
            </Row>
          </TitleBar>

          <Ribbon>
            <Clipped>sion</Clipped>
            <ToolGrid>
              {tools.map((t) => (
                <ToolCell key={t} aria-label={t}>
                  <Icon name={t} s={13} />
                  {!noCaret.includes(t) && <Caret />}
                </ToolCell>
              ))}
            </ToolGrid>
            <RibbonButton $w={58}><Icon name="trim" />Trim Entities<Caret /></RibbonButton>
            <RibbonButton $w={70}><Icon name="convert" />Convert Entities<Caret /></RibbonButton>
            <RibbonButton $w={37} $tall><Icon name="offset" /><span>Offset<br />Entities</span></RibbonButton>
            <RibbonButton $w={46} $tall $off><Icon name="offsetSurface" /><span>Offset On<br />Surface</span></RibbonButton>
            <PatternList>
              <PatternItem><Icon name="mirror" s={12} />Mirror Entities</PatternItem>
              <PatternItem $on><Icon name="linear" s={12} />Linear Sketch Pattern<Caret /></PatternItem>
              <PatternItem><Icon name="move" s={12} />Move Entities<Caret /></PatternItem>
            </PatternList>
            <RibbonButton $w={106}><Icon name="relation" />Display/Delete Relations<Caret /></RibbonButton>
            <RibbonButton $w={34} $tall><Icon name="repair" /><span>Repair<br />Sketch</span></RibbonButton>
            <RibbonButton $w={32} $off $rule><Icon name="snap" />Qui...<Caret /></RibbonButton>
            <RibbonButton $w={35} $tall $rule><Icon name="rapid" /><span>Rapid<br />Sketch</span></RibbonButton>
            <RibbonButton $w={47} $tall $on><Icon name="instant" />Instant2D</RibbonButton>
            <RibbonButton $w={66} $tall><Icon name="shaded" /><span>Shaded Sketch<br />Contours</span></RibbonButton>
          </Ribbon>

          <Workspace>
            <TabRow>
              <Tabs>{tabs.map(([t, w]) => <Tab key={t} $w={w}>{t}</Tab>)}</Tabs>
              <WindowTools>
                {["paneLeft", "paneRight", "minimize", "restore", "close"].map((n) => (
                  <IconButton key={n} $w={17} aria-label={`document ${n}`}><Icon name={n} s={10} /></IconButton>
                ))}
              </WindowTools>
            </TabRow>
            <Body>
              <Panel>
                <PanelTop />
                <PanelTabs>
                  <PanelTab $w={13} aria-label="Dimensions"><Icon name="target" s={11} /></PanelTab>
                  <PanelTab $w={27} aria-label="Appearance"><Icon name="ball" s={13} /></PanelTab>
                  <PanelTab $w={16} aria-label="CAM"><Icon name="table" s={12} /></PanelTab>
                  <PanelTab $w={15} $light aria-label="Previous">◂</PanelTab>
                  <PanelTab $w={15} $light aria-label="Next">▸</PanelTab>
                </PanelTabs>
                <PanelHead><button aria-label="Help"><Icon name="help" s={10} /></button></PanelHead>
                <Group>
                  <Collapse aria-label="Collapse direction 1"><Chevron /></Collapse>
                  <WideField $w={69} $h={22} $on aria-label="Direction 1 reference" />
                  <Spin id="a1" label="Direction 1 distance" />
                  <FieldLabel htmlFor="a2">spacing</FieldLabel>
                  <Spin id="a2" />
                  <FieldLabel htmlFor="a3">ce count</FieldLabel>
                  <Spin id="a3" />
                  <FieldLabel as="div">ction</FieldLabel>
                </Group>
                <Group>
                  <Collapse aria-label="Collapse direction 2"><Chevron /></Collapse>
                  <WideField $w={68} $h={22} aria-label="Direction 2 reference" />
                  <Spin id="b1" label="Direction 2 distance" />
                  <FieldLabel htmlFor="b2">spacing</FieldLabel>
                  <Spin id="b2" />
                  <FieldLabel htmlFor="b3">nce count</FieldLabel>
                  <Spin id="b3" />
                  <FieldLabel as="div">gle between axes</FieldLabel>
                </Group>
                <Group>
                  <Collapse aria-label="Collapse entities"><Chevron /></Collapse>
                  <WideField $w={73} $h={28} aria-label="Entities to pattern" />
                  <ScrollDot />
                </Group>
              </Panel>
              <Viewport>
                <Sketch />
                <ViewBar>
                  <Tree><span>▸</span><Icon name="part" s={13} />{"Part2  (Default<<De..."}</Tree>
                  {views.map(([n, c]) => (
                    <Row key={n}>
                      <IconButton $w={17} aria-label={n}><Icon name={n} s={13} /></IconButton>
                      {c && <IconButton $w={10} aria-label={`${n} options`}><Caret /></IconButton>}
                    </Row>
                  ))}
                </ViewBar>
                <SplitHandle />
                <CalloutBox n={2} x={-2} y={323} count="4" edge="#444" />
                <CalloutBox n={1} x={366} y={268} count="8" edge="#d8d8d8" />
                <Handles />
                <Confirm>
                  <svg width="52" height="40" viewBox="0 0 52 40" fill="none" aria-hidden="true">
                    <path d="m6 9 6 6L23 3" stroke="#c5dfc8" strokeWidth="4.500" />
                    <path d="m36 23 12 12m0-12L36 35" stroke="#ebc3c9" strokeWidth="5" />
                  </svg>
                </Confirm>
                <TaskPane>
                  {["home", "library", "folder", "palette", "ball", "props", "chat"].map((n, i) => (
                    <TaskButton key={n} $on={i === 0} aria-label={`${n} pane`}><Icon name={n} s={13} /></TaskButton>
                  ))}
                </TaskPane>
              </Viewport>
            </Body>
          </Workspace>
        </AppWindow>
      </Card>

      <Footer>
        <Contacts>
          <Badge><Globe /></Badge>
          <FooterLink href="#site">WWW.UOMUS.EDU.IQ</FooterLink>
          <Badge><Phone /></Badge>
          <FooterLink $big href="tel:6163">6163</FooterLink>
        </Contacts>
        <Motto>
          <MottoLine $lead>الأولــــــى على الجامــــــــــعات الأهليــــة</MottoLine>
          <MottoLine>الكليــــــــة الـــــــتقنية الــــــــهندسية</MottoLine>
          <MottoLine>هندســـــة تقنيــــــات الوقود والطاقة</MottoLine>
        </Motto>
        <Brand>
          <BrandText>
            <BrandArabic>جَامِعَّة المُسْتَقبَل</BrandArabic>
            <BrandLatin>AL-MUSTAQBAL  UNIVERSITY</BrandLatin>
          </BrandText>
          <Shield />
        </Brand>
      </Footer>
    </Page>
  );
}
